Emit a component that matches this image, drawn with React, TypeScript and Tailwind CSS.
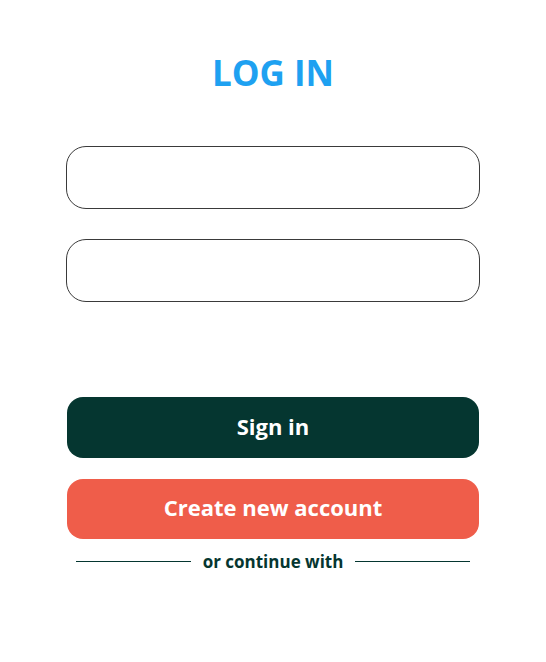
export default function App() {
  return (
    <div className="min-h-screen bg-white font-['Open_Sans',sans-serif]">
      <div className="mx-auto w-[414px] pt-[46px]">
        <h1 className="text-center text-[35px] font-bold leading-[54px] text-[#1ea1f1]">LOG IN</h1>

        <div className="mt-[46px] flex flex-col gap-[30px]">
          <input className="h-[63px] w-full rounded-[20px] border border-[#3a3a3a] px-5 outline-none" />
          <input type="password" className="h-[63px] w-full rounded-[20px] border border-[#3a3a3a] px-5 outline-none" />
        </div>

        <div className="mt-[95px] flex flex-col gap-[21px] px-px">
          <button className="h-[61px] w-full rounded-[16px] bg-[#053630] pb-[3px] text-[22px] font-bold text-white">
            Sign in
          </button>
          <button className="h-[60px] w-full rounded-[16px] bg-[#ef5d4a] pb-[3px] text-[22px] font-bold text-white">
            Create new account
          </button>
        </div>

        <div className="mt-[10px] flex items-center gap-3 px-[10px]">
          <div className="h-px flex-1 bg-[#053630]" />
          <span className="text-[17px] font-bold text-[#053630]">or continue with</span>
          <div className="h-px flex-1 bg-[#053630]" />
        </div>
      </div>
    </div>
  )
}
